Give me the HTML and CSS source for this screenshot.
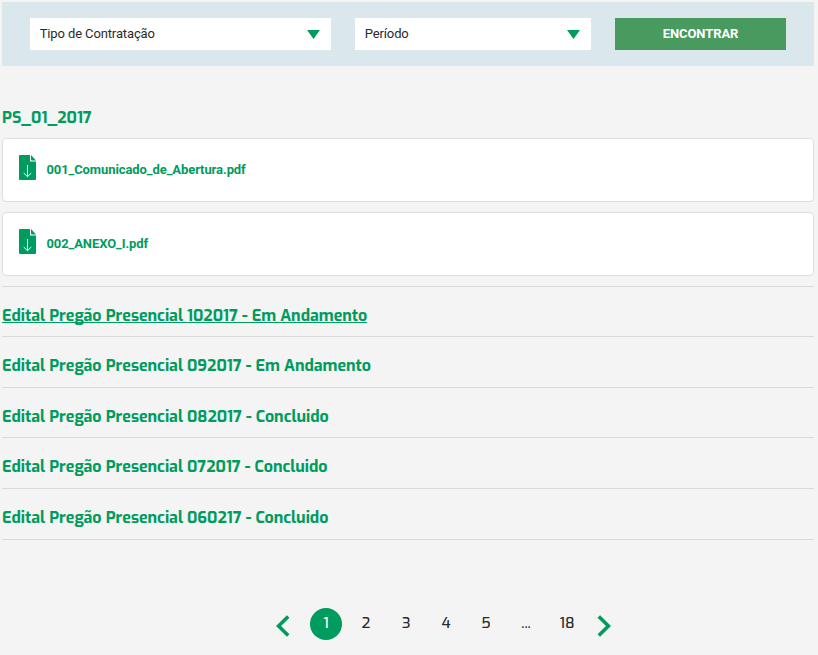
FILE: index.html
```
<!DOCTYPE html>
<html lang="pt-BR">
<head>
<meta charset="utf-8">
<title>Licitações</title>
<link rel="stylesheet" href="styles.css">
</head>
<body>
<form class="filters">
  <div class="select select-type"><span>Tipo de Contratação</span><svg class="caret" width="13" height="9" viewBox="0 0 13 9"><path d="M0 0h13L6.500 9z"/></svg></div>
  <div class="select select-period"><span>Período</span><svg class="caret" width="13" height="9" viewBox="0 0 13 9"><path d="M0 0h13L6.500 9z"/></svg></div>
  <button class="find" type="button">ENCONTRAR</button>
</form>
<main>
  <h2 class="title">PS_01_2017</h2>
  <div class="file">
    <svg class="file-icon" width="17" height="25" viewBox="0 0 17 25"><path class="sheet" d="M1 0h10v6.500h6V24a1 1 0 0 1-1 1H1a1 1 0 0 1-1-1V1a1 1 0 0 1 1-1z"/><path class="sheet" d="M12 0L17 5.500h-4a1 1 0 0 1-1-1z"/><path class="arrow" d="M8.500 10v11.500M4.700 18l3.800 3.700 3.800-3.700"/></svg>
    <a class="file-name">001_Comunicado_de_Abertura.pdf</a>
  </div>
  <div class="file">
    <svg class="file-icon" width="17" height="25" viewBox="0 0 17 25"><path class="sheet" d="M1 0h10v6.500h6V24a1 1 0 0 1-1 1H1a1 1 0 0 1-1-1V1a1 1 0 0 1 1-1z"/><path class="sheet" d="M12 0L17 5.500h-4a1 1 0 0 1-1-1z"/><path class="arrow" d="M8.500 10v11.500M4.700 18l3.800 3.700 3.800-3.700"/></svg>
    <a class="file-name">002_ANEXO_I.pdf</a>
  </div>
  <ul class="notices">
    <li><a class="notice hovered">Edital Pregão Presencial 102017 - Em Andamento</a></li>
    <li><a class="notice">Edital Pregão Presencial 092017 - Em Andamento</a></li>
    <li><a class="notice">Edital Pregão Presencial 082017 - Concluido</a></li>
    <li><a class="notice">Edital Pregão Presencial 072017 - Concluido</a></li>
    <li><a class="notice">Edital Pregão Presencial 060217 - Concluido</a></li>
  </ul>
</main>
<nav class="pager">
  <svg class="chevron" width="14" height="22" viewBox="0 0 14 22"><path d="M12.200 1.500L2.500 11l9.700 9.500"/></svg>
  <div class="pages">
    <a class="page current">1</a><a class="page">2</a><a class="page">3</a><a class="page">4</a><a class="page">5</a><a class="page">...</a><a class="page last">18</a>
  </div>
  <svg class="chevron" width="14" height="22" viewBox="0 0 14 22"><path d="M1.800 1.500L11.500 11l-9.700 9.500"/></svg>
</nav>
</body>
</html>
```
FILE: styles.css
```
* { box-sizing: border-box; }
body {
  margin: 0;
  padding: 2px 4px 0 2px;
  height: 655px;
  overflow: hidden;
  background: #f4f4f4;
  font-family: Roboto, sans-serif;
  color: #2b2b2b;
}
.filters {
  display: flex;
  gap: 24px;
  height: 64px;
  padding: 16px 28px;
  background: #dae7ed;
}
.select {
  display: flex;
  align-items: center;
  justify-content: space-between;
  padding: 0 11px 0 9.700px;
  background: #fff;
  font-size: 13px;
  letter-spacing: -0.12px;
}
.select span { padding-bottom: 2px; }
.select-type { width: 301px; }
.select-period { width: 236px; }
.caret { fill: #009b5e; }
.find {
  width: 171px;
  border: 0;
  padding: 0 0 2px;
  background: #499a5e;
  color: #fff;
  font: 700 13px Roboto, sans-serif;
  letter-spacing: -0.1px;
}
.title {
  margin: 41px 0 10px;
  font: 700 16px/21px Exo, "Exo 2", Roboto, sans-serif;
  color: #009b5e;
}
.file {
  display: flex;
  align-items: flex-start;
  gap: 10.400px;
  height: 64px;
  margin-bottom: 10px;
  padding: 16px;
  border: 1px solid #dedede;
  border-radius: 4px;
  background: #fff;
}
.sheet { fill: #009b5e; }
.arrow { fill: none; stroke: #fff; stroke-width: 1; }
.file-name {
  margin-top: 6px;
  font-size: 13px;
  line-height: 18px;
  font-weight: 700;
  letter-spacing: -0.09px;
  color: #009b5e;
}
.notices {
  list-style: none;
  margin: -0.2px 0 0;
  padding: 0;
  border-top: 1px solid #dadada;
}
.notices li {
  height: 50.55px;
  padding-top: 16.85px;
  border-bottom: 1px solid #dadada;
}
.notice {
  display: block;
  width: max-content;
  font: 700 16px/23px Exo, "Exo 2", Roboto, sans-serif;
  letter-spacing: -0.01px;
  color: #009b5e;
}
.hovered {
  text-decoration: underline;
  text-decoration-thickness: 1px;
  text-underline-offset: 1px;
  text-decoration-skip-ink: none;
}
.pager {
  display: flex;
  margin: 68px 0 0 274px;
  font-family: Exo, "Exo 2", Roboto, sans-serif;
  font-size: 15px;
  font-weight: 500;
}
.pages { display: flex; gap: 8px; margin: 0 13px 0 20px; }
.page {
  width: 32px;
  height: 32px;
  line-height: 31px;
  text-align: center;
}
.last { width: 34px; }
.current { border-radius: 50%; background: #009b5e; color: #fff; }
.chevron { margin-top: 7px; fill: none; stroke: #009b5e; stroke-width: 3.6; }
```
